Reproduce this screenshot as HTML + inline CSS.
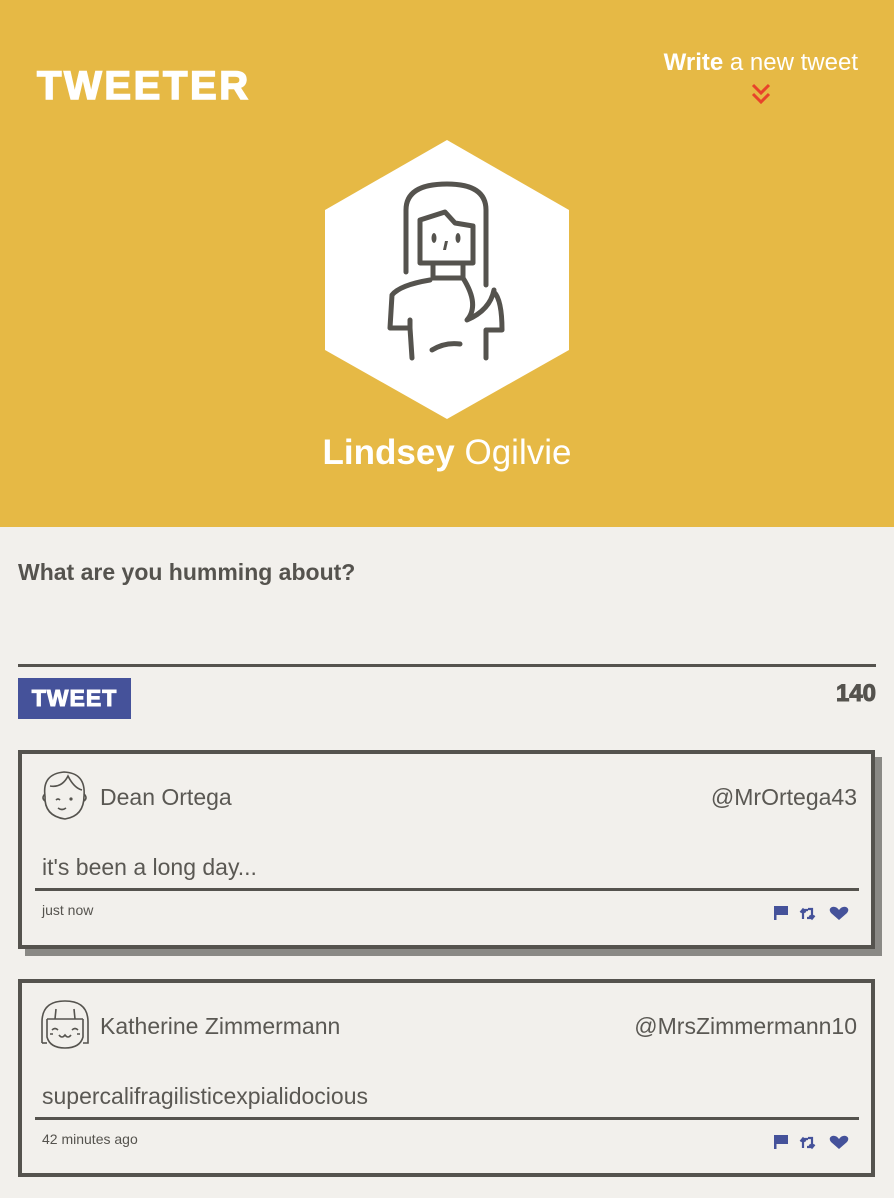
<!DOCTYPE html>
<html><head><meta charset="utf-8"><style>
*{margin:0;padding:0;box-sizing:border-box}
body{width:894px;height:1198px;background:#f2f0ec;font-family:"Liberation Sans",sans-serif;color:#55534e;position:relative;overflow:hidden}
.hdr{position:absolute;left:0;top:0;width:894px;height:527px;background:#e6b945}
.logo{position:absolute;left:37px;top:64px;font-size:40px;font-weight:900;color:#fff;letter-spacing:2.6px;-webkit-text-stroke:1.5px #fff}
.write{position:absolute;right:36px;top:49px;color:#fff;font-size:24px}
.chev{position:absolute;left:750px;top:82px}
.name{position:absolute;left:0;width:894px;top:433px;text-align:center;color:#fff;font-size:35px}
.lbl{position:absolute;left:18px;top:559px;font-size:23px;font-weight:bold}
.ta{position:absolute;left:18px;top:664px;width:858px;height:3px;background:#55534e}
.btn{position:absolute;left:18px;top:678px;width:113px;height:41px;background:#45529a;color:#fff;font-size:23px;font-weight:900;letter-spacing:1px;-webkit-text-stroke:1px #fff;text-align:center;line-height:41px}
.cnt{position:absolute;right:18px;top:680px;font-size:24px;font-weight:900;-webkit-text-stroke:1px #55534e}
.card{position:absolute;left:18px;width:857px;border:4px solid #55534e;background:#f2f0ec}
.card .un{position:absolute;left:78px;top:30px;font-size:23px;color:#5a5853}
.card .hd{position:absolute;right:14px;top:30px;font-size:23px;color:#5a5853}
.card .tx{position:absolute;left:20px;top:100px;font-size:23px;color:#5a5853}
.card .ln{position:absolute;left:13px;top:134px;width:824px;height:3px;background:#55534e}
.card .ts{position:absolute;left:20px;top:148px;font-size:14px}
.card .ic{position:absolute;left:751px;top:150px}
.av{position:absolute;left:16px;top:14px}
</style></head><body>
<div class="hdr">
<div class="logo">TWEETER</div>
<div class="write"><b>Write</b> a new tweet</div>
<svg class="chev" width="22" height="26" viewBox="0 0 22 26"><path d="M3 3l8 8 8-8M3 12l8 8 8-8" fill="none" stroke="#e8432a" stroke-width="3"/></svg>
<svg style="position:absolute;left:325px;top:140px" width="244" height="280" viewBox="325 140 244 280">
<polygon points="447,140 569,210 569,350 447,419 325,350 325,210" fill="#fff"/>
<g fill="none" stroke="#55534e" stroke-width="5" stroke-linejoin="round" stroke-linecap="round">
<path d="M406 272 L406 210 Q406 184 447 184 Q486 184 486 210 L486 285"/>
<path d="M420 263 L420 220 L445 212 L455 223 L473 226 L473 263 Z"/>
<path d="M433 263 L433 278 L463 278 L463 263"/>
<path d="M463 278 Q480 305 467 320 Q490 310 494 290"/>
<path d="M430 280 Q400 285 392 295 L390 328 L410 328 L410 320 M410 328 L412 358"/>
<path d="M494 292 Q502 300 502 330 L486 330 L486 358"/>
<path d="M432 350 Q445 342 460 344"/>
</g>
<g fill="#55534e"><ellipse cx="434" cy="238" rx="2.5" ry="5"/><ellipse cx="458" cy="238" rx="2.5" ry="5"/><path d="M445 241 L448 241 L446 250 L443 250Z"/></g>
</svg>
<div class="name"><b>Lindsey</b> Ogilvie</div>
</div>
<div class="lbl">What are you humming about?</div>
<div class="ta"></div>
<div class="btn">TWEET</div>
<div class="cnt">140</div>

<div class="card" style="top:750px;height:199px;box-shadow:7px 7px 0 #8a8985">
<svg class="av" width="54" height="56" viewBox="0 0 54 56"><g fill="none" stroke="#55534e" stroke-width="1.6"><path d="M7 28 Q4 6 26 4 Q48 5 46 28"/><path d="M7 28 Q6 48 27 51 Q46 48 46 28"/><path d="M12 18 Q24 20 30 8 Q36 20 44 22"/><path d="M7 26 Q3 30 7 33 M46 26 Q50 30 46 33"/><path d="M18 32 Q20 30 22 32 M20 40 Q24 43 28 40"/></g><circle cx="33" cy="31" r="1.6" fill="#55534e"/></svg>
<div class="un">Dean Ortega</div>
<div class="hd">@MrOrtega43</div>
<div class="tx">it's been a long day...</div>
<div class="ln"></div>
<div class="ts">just now</div>
<svg class="ic" width="80" height="20" viewBox="0 0 80 20"><g fill="#45529a"><rect x="1" y="2" width="2.5" height="14"/><path d="M3 2h12v9H3z"/><g stroke="#45529a" stroke-width="2.2" fill="none"><path d="M30 15V6h5 M27.5 8.5L30 5.5l2.5 3"/><path d="M35 5h4v9h-5 M36.5 11.5L39 14.5l2.5-3"/></g><path d="M66 16 L58 9 Q55 5 59 3 Q63 2 66 6 Q69 2 73 3 Q77 5 74 9Z"/></g></svg>
</div>

<div class="card" style="top:979px;height:198px">
<svg class="av" width="54" height="56" viewBox="0 0 54 56"><g fill="none" stroke="#55534e" stroke-width="1.6"><path d="M4 46 L4 25 Q4 4 27 4 Q50 4 50 25 L50 46 L45 46"/><path d="M9 46 L4 46"/><path d="M9 22 L45 22 M9 22 L9 40 Q12 51 27 51 Q42 51 45 40 L45 22"/><path d="M18 12 L17 22 M36 12 L37 22"/><path d="M14 33 Q17 30 20 33 M34 33 Q37 30 40 33"/><path d="M21 38 Q24 42 27 38 Q30 42 33 38"/><path d="M12 37h3 M39 37h3"/></g></svg>
<div class="un">Katherine Zimmermann</div>
<div class="hd">@MrsZimmermann10</div>
<div class="tx">supercalifragilisticexpialidocious</div>
<div class="ln"></div>
<div class="ts">42 minutes ago</div>
<svg class="ic" width="80" height="20" viewBox="0 0 80 20"><g fill="#45529a"><rect x="1" y="2" width="2.5" height="14"/><path d="M3 2h12v9H3z"/><g stroke="#45529a" stroke-width="2.2" fill="none"><path d="M30 15V6h5 M27.5 8.5L30 5.5l2.5 3"/><path d="M35 5h4v9h-5 M36.5 11.5L39 14.5l2.5-3"/></g><path d="M66 16 L58 9 Q55 5 59 3 Q63 2 66 6 Q69 2 73 3 Q77 5 74 9Z"/></g></svg>
</div>
</body></html>
